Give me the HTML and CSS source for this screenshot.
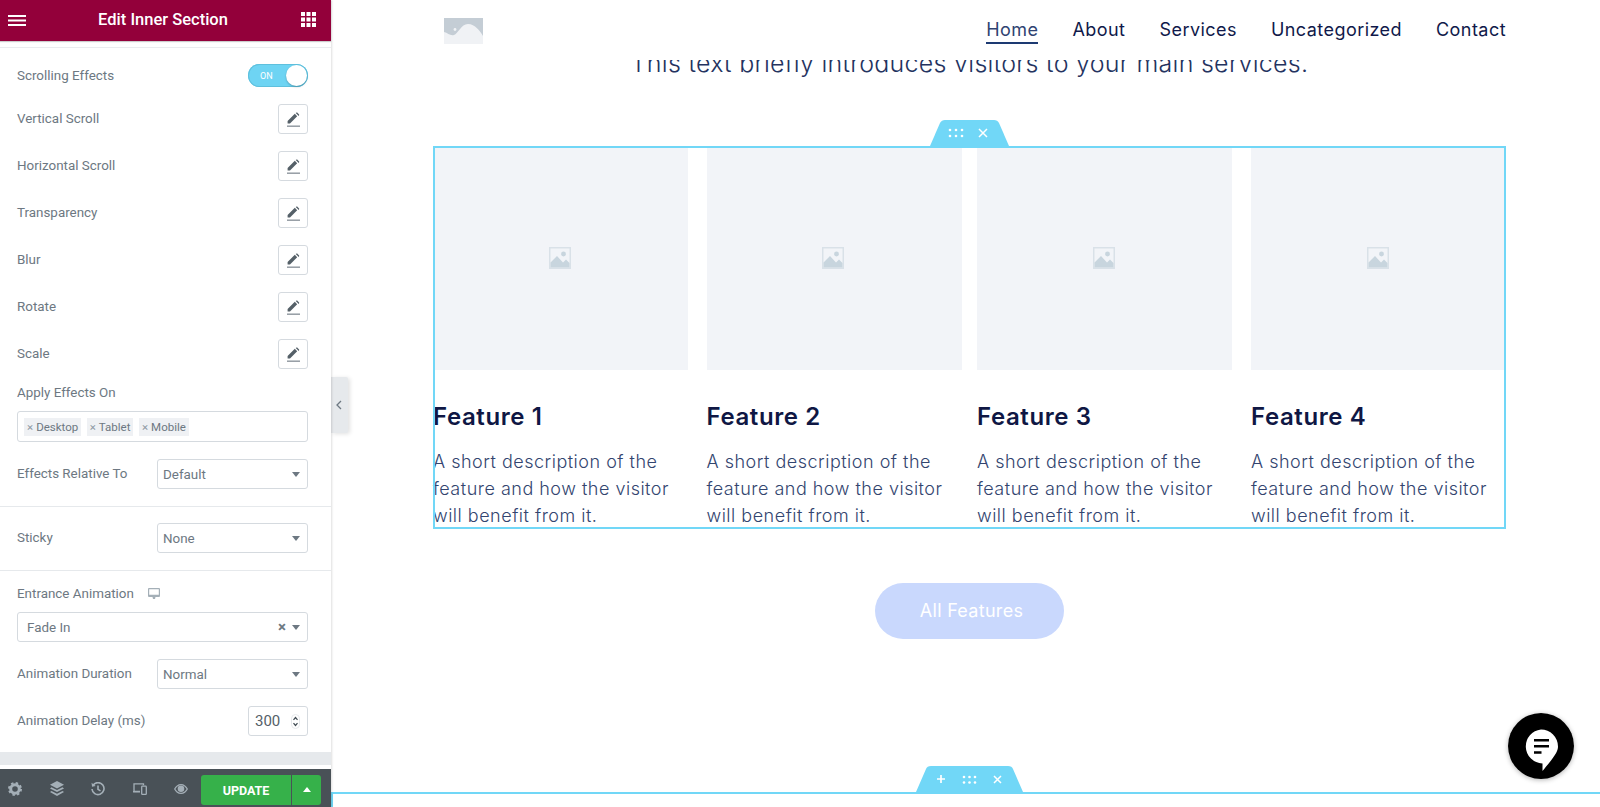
FILE: index.html
```html
<!DOCTYPE html>
<html lang="en">
<head>
<meta charset="utf-8">
<title>Edit Inner Section</title>
<link rel="stylesheet" href="styles.css">
</head>
<body>
<div class="app">
  <aside class="panel">
    <header class="panel-head">
      <svg class="ph-menu" width="18" height="11" viewBox="0 0 18 11"><path d="M0 0h18v2H0zM0 4.500h18v2H0zM0 9h18v2H0z" fill="#fff"/></svg>
      <h1 class="panel-title">Edit Inner Section</h1>
      <svg class="ph-grid" width="15" height="15" viewBox="0 0 15 15" fill="#fff"><path d="M0 0h4v4H0zM5.500 0h4v4h-4zM11 0h4v4h-4zM0 5.500h4v4H0zM5.500 5.500h4v4h-4zM11 5.500h4v4h-4zM0 11h4v4H0zM5.500 11h4v4h-4zM11 11h4v4h-4z"/></svg>
    </header>
    <div class="panel-body">
      <div class="group group-first">
        <div class="row row-toggle">
          <span class="lbl">Scrolling Effects</span>
          <span class="toggle"><span class="toggle-on">ON</span><span class="knob"></span></span>
        </div>
        <div class="row row-edit"><span class="lbl">Vertical Scroll</span><button class="edit"><svg width="13" height="15" viewBox="0 0 13 15"><path d="M0 8.600 7.200 1.400 9.600 3.800 2.400 11H0zM8.100.5 9 0l.6.1L11.500 2l.1.6-.5.9z" fill="#556068" transform="translate(.6 .4)"/><path d="M0 13.600h13v1.100H0z" fill="#6d7882"/></svg></button></div>
        <div class="row row-edit"><span class="lbl">Horizontal Scroll</span><button class="edit"><svg width="13" height="15" viewBox="0 0 13 15"><path d="M0 8.600 7.200 1.400 9.600 3.800 2.400 11H0zM8.100.5 9 0l.6.1L11.500 2l.1.6-.5.9z" fill="#556068" transform="translate(.6 .4)"/><path d="M0 13.600h13v1.100H0z" fill="#6d7882"/></svg></button></div>
        <div class="row row-edit"><span class="lbl">Transparency</span><button class="edit"><svg width="13" height="15" viewBox="0 0 13 15"><path d="M0 8.600 7.200 1.400 9.600 3.800 2.400 11H0zM8.100.5 9 0l.6.1L11.500 2l.1.6-.5.9z" fill="#556068" transform="translate(.6 .4)"/><path d="M0 13.600h13v1.100H0z" fill="#6d7882"/></svg></button></div>
        <div class="row row-edit"><span class="lbl">Blur</span><button class="edit"><svg width="13" height="15" viewBox="0 0 13 15"><path d="M0 8.600 7.200 1.400 9.600 3.800 2.400 11H0zM8.100.5 9 0l.6.1L11.500 2l.1.6-.5.9z" fill="#556068" transform="translate(.6 .4)"/><path d="M0 13.600h13v1.100H0z" fill="#6d7882"/></svg></button></div>
        <div class="row row-edit"><span class="lbl">Rotate</span><button class="edit"><svg width="13" height="15" viewBox="0 0 13 15"><path d="M0 8.600 7.200 1.400 9.600 3.800 2.400 11H0zM8.100.5 9 0l.6.1L11.500 2l.1.6-.5.9z" fill="#556068" transform="translate(.6 .4)"/><path d="M0 13.600h13v1.100H0z" fill="#6d7882"/></svg></button></div>
        <div class="row row-edit"><span class="lbl">Scale</span><button class="edit"><svg width="13" height="15" viewBox="0 0 13 15"><path d="M0 8.600 7.200 1.400 9.600 3.800 2.400 11H0zM8.100.5 9 0l.6.1L11.500 2l.1.6-.5.9z" fill="#556068" transform="translate(.6 .4)"/><path d="M0 13.600h13v1.100H0z" fill="#6d7882"/></svg></button></div>
        <div class="lbl lbl-apply">Apply Effects On</div>
        <div class="tags">
          <span class="tag"><i class="tag-x">×</i>Desktop</span>
          <span class="tag"><i class="tag-x">×</i>Tablet</span>
          <span class="tag"><i class="tag-x">×</i>Mobile</span>
        </div>
        <div class="row row-select row-relative">
          <span class="lbl">Effects Relative To</span>
          <div class="select"><span>Default</span><i class="caret"></i></div>
        </div>
      </div>
      <div class="group group-sticky">
        <div class="row row-select">
          <span class="lbl">Sticky</span>
          <div class="select"><span>None</span><i class="caret"></i></div>
        </div>
      </div>
      <div class="group group-anim">
        <div class="lbl lbl-entrance">Entrance Animation
          <svg class="monitor" width="12" height="11" viewBox="0 0 12 11"><path d="M1 0h10a1 1 0 0 1 1 1v7a1 1 0 0 1-1 1H7.500L7 11H5l-.5-2H1a1 1 0 0 1-1-1V1a1 1 0 0 1 1-1zm.2 1.200v5.600h9.600V1.200z" fill="#a4afb7"/></svg>
        </div>
        <div class="select select-wide"><span>Fade In</span><i class="clear">×</i><i class="caret"></i></div>
        <div class="row row-select row-duration">
          <span class="lbl">Animation Duration</span>
          <div class="select"><span>Normal</span><i class="caret"></i></div>
        </div>
        <div class="row row-delay">
          <span class="lbl">Animation Delay (ms)</span>
          <div class="number"><span>300</span>
            <svg width="9" height="15" viewBox="0 0 9 15"><rect x=".5" y=".5" width="8" height="14" rx="4" fill="#fff" stroke="#e6e9ec"/><path d="M2.500 5.800 4.500 3.500l2 2.300M2.500 9.200l2 2.300 2-2.300" fill="none" stroke="#3f4a52" stroke-width="1.200"/></svg>
          </div>
        </div>
      </div>
      <div class="panel-gap"></div>
    </div>
    <footer class="panel-foot">
      <div class="foot-icons">
        <svg width="14" height="14" viewBox="0 0 14 14"><circle cx="7" cy="7" r="4.300" fill="none" stroke="#a4afb7" stroke-width="3"/><circle cx="7" cy="7" r="6" fill="none" stroke="#a4afb7" stroke-width="2" stroke-dasharray="2.400 2.310"/></svg>
        <svg width="14" height="15" viewBox="0 0 14 15" fill="#a4afb7"><path d="M7 0l7 3.700-7 3.700L0 3.700z"/><path d="M1.500 6.200 7 9.100l5.500-2.900L14 7.400l-7 3.700-7-3.700z"/><path d="M1.500 9.900 7 12.800l5.500-2.900 1.500 1.200L7 15l-7-3.900z"/></svg>
        <svg width="14" height="14" viewBox="0 0 14 14" fill="none"><path d="M2.200 3A6 6 0 1 1 1 7" stroke="#a4afb7" stroke-width="1.600"/><path d="M.5 .8 1 4.700l3.700-.6z" fill="#a4afb7"/><path d="M7 3.500V7.400l2.500 1.500" stroke="#a4afb7" stroke-width="1.600"/></svg>
        <svg width="14" height="12" viewBox="0 0 14 12" fill="none"><path d="M7 8.500H1V.8h9.500v1.500" stroke="#a4afb7" stroke-width="1.300"/><path d="M0 8h7v1.400H0z" fill="#a4afb7"/><rect x="8.700" y="3.200" width="4.600" height="8.200" rx=".7" stroke="#a4afb7" stroke-width="1.300"/></svg>
        <svg width="14" height="10" viewBox="0 0 14 10"><path d="M7 0c3 0 5.500 2 7 5-1.500 3-4 5-7 5S1.500 8 0 5c1.500-3 4-5 7-5zm0 1.200C4.700 1.200 2.700 2.700 1.400 5 2.700 7.300 4.700 8.800 7 8.800s4.300-1.500 5.600-3.800C11.300 2.700 9.300 1.200 7 1.200z" fill="#a4afb7"/><circle cx="7" cy="4.800" r="3.300" fill="#a4afb7"/></svg>
      </div>
      <div class="publish">
        <button class="update">UPDATE</button>
        <button class="update-more"><svg width="8" height="5" viewBox="0 0 8 5"><path d="M4 0l4 5H0z" fill="#fff"/></svg></button>
      </div>
    </footer>
  </aside>

  <main class="preview">
    <button class="collapse" aria-label="Collapse"><svg width="6" height="10" viewBox="0 0 6 10"><path d="M5 1 1 5l4 4" fill="none" stroke="#6d7882" stroke-width="1.300"/></svg></button>
    <nav class="site-nav">
      <svg class="logo" width="39" height="26" viewBox="0 0 39 26"><rect width="39" height="26" fill="#c4cdd5"/><path d="M0 14C4 15 6 18 10 17S17 6 24 6 36 13 39 18V26H0z" fill="#f0f2f5"/><circle cx="11" cy="11.500" r="1.400" fill="#f0f2f5"/></svg>
      <ul class="menu">
        <li class="menu-item active">Home</li>
        <li class="menu-item">About</li>
        <li class="menu-item">Services</li>
        <li class="menu-item">Uncategorized</li>
        <li class="menu-item">Contact</li>
      </ul>
    </nav>
    <div class="intro"><p class="intro-text">This text briefly introduces visitors to your main services.</p></div>
    <section class="features">
      <div class="handle handle-top">
        <svg width="79" height="26" viewBox="0 0 79 26"><path d="M0 26 10 3Q11.500 0 15 0H64Q67.500 0 69 3L79 26z" fill="#71d7f7"/><g fill="#fff"><circle cx="20" cy="10" r="1.300"/><circle cx="26" cy="10" r="1.300"/><circle cx="32" cy="10" r="1.300"/><circle cx="20" cy="16" r="1.300"/><circle cx="26" cy="16" r="1.300"/><circle cx="32" cy="16" r="1.300"/></g><path d="m49 9 8 8m0-8-8 8" stroke="#fff" stroke-width="1.500"/></svg>
      </div>
      <article class="feature">
        <div class="tile"><svg width="22" height="22" viewBox="0 0 22 22"><path d="M0 0h22v22H0z" fill="#d9e1e8"/><path d="M1.500 1.500h19v19h-19z" fill="#f2f4f8"/><path d="M1.500 20.500v-5L8 9l6 6.500 3-3 3.500 3.500v4.500z" fill="#c8d5de"/><circle cx="14.500" cy="7" r="2.400" fill="#c8d5de"/></svg></div>
        <h2 class="feature-title">Feature 1</h2>
        <p class="feature-text">A short description of the feature and how the visitor will benefit from it.</p>
      </article>
      <article class="feature">
        <div class="tile"><svg width="22" height="22" viewBox="0 0 22 22"><path d="M0 0h22v22H0z" fill="#d9e1e8"/><path d="M1.500 1.500h19v19h-19z" fill="#f2f4f8"/><path d="M1.500 20.500v-5L8 9l6 6.500 3-3 3.500 3.500v4.500z" fill="#c8d5de"/><circle cx="14.500" cy="7" r="2.400" fill="#c8d5de"/></svg></div>
        <h2 class="feature-title">Feature 2</h2>
        <p class="feature-text">A short description of the feature and how the visitor will benefit from it.</p>
      </article>
      <article class="feature">
        <div class="tile"><svg width="22" height="22" viewBox="0 0 22 22"><path d="M0 0h22v22H0z" fill="#d9e1e8"/><path d="M1.500 1.500h19v19h-19z" fill="#f2f4f8"/><path d="M1.500 20.500v-5L8 9l6 6.500 3-3 3.500 3.500v4.500z" fill="#c8d5de"/><circle cx="14.500" cy="7" r="2.400" fill="#c8d5de"/></svg></div>
        <h2 class="feature-title">Feature 3</h2>
        <p class="feature-text">A short description of the feature and how the visitor will benefit from it.</p>
      </article>
      <article class="feature">
        <div class="tile"><svg width="22" height="22" viewBox="0 0 22 22"><path d="M0 0h22v22H0z" fill="#d9e1e8"/><path d="M1.500 1.500h19v19h-19z" fill="#f2f4f8"/><path d="M1.500 20.500v-5L8 9l6 6.500 3-3 3.500 3.500v4.500z" fill="#c8d5de"/><circle cx="14.500" cy="7" r="2.400" fill="#c8d5de"/></svg></div>
        <h2 class="feature-title">Feature 4</h2>
        <p class="feature-text">A short description of the feature and how the visitor will benefit from it.</p>
      </article>
    </section>
    <div class="cta"><a class="cta-btn">All Features</a></div>
    <section class="next-section">
      <div class="handle handle-bottom">
        <svg width="107" height="26" viewBox="0 0 107 26"><path d="M0 26 10 3Q11 0 15 0H92Q96 0 97 3L107 26z" fill="#71d7f7"/><path d="M25 9v8M21 13h8" stroke="#fff" stroke-width="1.700"/><g fill="#fff"><circle cx="48" cy="11" r="1.300"/><circle cx="53.500" cy="11" r="1.300"/><circle cx="59" cy="11" r="1.300"/><circle cx="48" cy="16.500" r="1.300"/><circle cx="53.500" cy="16.500" r="1.300"/><circle cx="59" cy="16.500" r="1.300"/></g><path d="m78 10 7 7m0-7-7 7" stroke="#fff" stroke-width="1.500"/></svg>
      </div>
    </section>
    <button class="chat" aria-label="Chat"><svg width="66" height="66" viewBox="0 0 66 66"><circle cx="33" cy="33" r="33" fill="#000"/><path d="M33 16.500a17 17 0 0 1 17 17c0 5-3 9.500-15.500 24.500v-7.600A17 17 0 0 1 33 16.500z" fill="#fff"/><path d="M26 26h15v2.600H26zM26 32h15v2.600H26zM26 38.200h7.500v2.600H26z" fill="#000"/></svg></button>
  </main>
</div>
</body>
</html>
```
FILE: styles.css
```css
* { box-sizing: border-box; }
html, body { margin: 0; height: 100%; overflow: hidden; background: #fff; }
button { font: inherit; padding: 0; border: 0; background: none; }
ul { margin: 0; padding: 0; list-style: none; }
h1, h2, p { margin: 0; }
i { font-style: normal; }

.app { display: flex; width: 1600px; height: 807px; }

/* Panel */
.panel {
  width: 331px; height: 807px; flex: none; display: flex; flex-direction: column;
  background: #fff; font-family: Roboto, sans-serif; font-size: 13.400px; color: #6d7882;
  box-shadow: 1px 0 2px rgba(0,0,0,.13); position: relative; z-index: 3;
}
.panel-head {
  height: 41px; flex: none; display: flex; align-items: center; padding: 0 15px 0 8px;
  background: #93003a; color: #fff; box-shadow: 0 1px 1px rgba(0,0,0,.2);
}
.ph-menu { margin-top: -1px; }
.panel-title { flex: 1; text-align: center; font-size: 16.500px; font-weight: 500; margin-top: -3px; padding-right: 1px; }
.ph-grid { margin-top: -2px; }
.panel-body { flex: 1; display: flex; flex-direction: column; }
.group { padding: 0 23px 0 17px; border-bottom: 1px solid #e6e9ec; }
.group-first { margin-top: 6px; border-top: 1px solid #eaecef; padding-top: 16px; height: 460px; }
.group-sticky { height: 64px; padding-top: 16px; }
.group-anim { padding-top: 12px; height: 182px; }
.row { display: flex; align-items: center; justify-content: space-between; }
.row-toggle { height: 23px; margin-bottom: 17px; }
.row-edit { height: 30px; margin-bottom: 17px; }
.row-edit:nth-child(7) { margin-bottom: 16px; }
.lbl { line-height: 16px; }
.toggle {
  width: 60px; height: 23px; border-radius: 12px; background: #6ed4f3; position: relative;
  display: flex; align-items: center; justify-content: space-between; padding: 0 1px 0 12px;
  box-shadow: inset 0 0 0 1px #5fc0dd;
}
.toggle-on { font-size: 9px; color: #fff; }
.knob { width: 21px; height: 21px; border-radius: 50%; background: #fff; box-shadow: 0 1px 2px rgba(0,0,0,.25); }
.edit {
  width: 30px; height: 30px; border: 1px solid #d5dadf; border-radius: 3px; background: #fff;
  display: flex; align-items: center; justify-content: center;
}
.lbl-apply { margin-bottom: 10px; }
.tags {
  height: 31px; border: 1px solid #d5dadf; border-radius: 3px; display: flex; align-items: center;
  gap: 5.500px; padding: 0 0 0 6px; margin-bottom: 17px;
}
.tag { height: 18px; background: #eff1f4; font-size: 11.500px; line-height: 18px; padding: 0 3px; display: flex; align-items: center; }
.tag-x { margin-right: 3px; color: #8d99a3; }
.select {
  width: 151px; height: 30px; border: 1px solid #d5dadf; border-radius: 3px; background: #fff;
  display: flex; align-items: center; padding: 0 7px 0 5px; color: #6d7882;
}
.select > span { flex: 1; }
.caret { width: 0; height: 0; border: 4.500px solid transparent; border-top: 5px solid #6d7882; border-bottom: 0; }
.select-wide { width: 100%; padding-left: 9px; margin: 8px 0 17px; }
.clear { margin-right: 6px; font-size: 15px; font-weight: 700; color: #6d7882; line-height: 1; }
.lbl-entrance { display: flex; align-items: center; height: 21px; }
.monitor { margin-left: 14px; }
.row-duration { margin-bottom: 17px; }
.number {
  width: 60px; height: 30px; border: 1px solid #d5dadf; border-radius: 3px;
  display: flex; align-items: center; justify-content: space-between; padding: 0 7px 0 6px; font-size: 15px; color: #556068;
}
.panel-gap { height: 12px; margin-top: auto; background: #e6e9ec; margin-bottom: 4px; }
.panel-foot {
  height: 39px; flex: none; background: #495157; display: flex; align-items: center; padding: 0 10px 0 8px;
}
.foot-icons { width: 193px; display: flex; align-items: center; justify-content: space-between; padding-right: 13px; }
.publish { display: flex; height: 30px; margin-top: 3px; }
.update {
  width: 90px; background: #36b14a; color: #fff; font-weight: 700; font-size: 12.500px;
  border-radius: 3px 0 0 3px;
}
.update-more {
  width: 29px; margin-left: 1px; background: #36b14a; border-radius: 0 3px 3px 0;
  display: flex; align-items: center; justify-content: center; padding-bottom: 1px;
}

/* Preview */
.preview {
  flex: 1; min-width: 0; position: relative; background: #fff; padding-left: 102px;
  font-family: Inter, sans-serif; color: #0f1744; display: flex; flex-direction: column; width: 1269px;
}
.collapse {
  position: absolute; left: 0; top: 377px; width: 17px; height: 56px; background: #e6e9ec;
  box-shadow: 2px 1px 4px rgba(0,0,0,.12); display: flex; align-items: center; justify-content: center;
  border-radius: 0 2px 2px 0; padding-right: 1px;
}
.site-nav {
  width: 1073px; height: 60px; flex: none; display: flex; justify-content: space-between; align-items: flex-start;
  padding: 18px 0 0 11px; background: #fff; position: relative; z-index: 1;
}
.menu { display: flex; gap: 34px; margin-top: -1px; }
.menu-item { font-size: 18px; line-height: 25px; height: 27px; color: #10194a; letter-spacing: .45px; }
.menu-item.active { color: #2f4372; border-bottom: 2px solid #1d3a72; }
.intro { width: 1073px; height: 20px; flex: none; overflow: hidden; margin-bottom: 66px; }
.intro-text {
  margin-top: -13px; text-align: center; font-size: 25px; line-height: 32px; font-weight: 300; color: #24335f; letter-spacing: .28px;
}
.features {
  width: 1073px; height: 383px; flex: none; position: relative; display: grid;
  grid-template-columns: 273.500px 270.500px 274px 255px;
  outline: 2px solid #71d7f7; outline-offset: -2px;
}
.handle { position: absolute; line-height: 0; }
.handle-top { top: -26px; left: 497px; }
.tile {
  width: 255px; height: 224px; background: #f2f4f8; display: flex; align-items: center; justify-content: center;
  padding: 0 2px 1px 0;
}
.feature-title { margin-top: 31px; font-size: 24px; line-height: 32px; font-weight: 600; color: #0f1744; letter-spacing: .6px; }
.feature-text {
  margin-top: 15px; font-size: 18px; line-height: 27px; font-weight: 300; color: #33456f; width: 250px; letter-spacing: .5px;
}
.cta { width: 1073px; flex: none; margin-top: 54px; display: flex; justify-content: center; }
.cta-btn {
  width: 189px; height: 56px; border-radius: 28px; background: #c9d8fd; color: #fff; font-size: 18px; letter-spacing: .3px;
  display: flex; align-items: center; justify-content: center; padding: 0 0 2px 4px;
}
.next-section {
  flex: none; margin: 153px 0 0 -102px; height: 15px; border-top: 2px solid #71d7f7; border-left: 2px solid #71d7f7; position: relative;
}
.handle-bottom { top: -28px; left: 583px; }
.chat {
  position: absolute; left: 1177px; top: 713px; width: 66px; height: 66px; border-radius: 50%; line-height: 0;
  box-shadow: 0 1px 5px rgba(0,0,0,.3);
}
```
